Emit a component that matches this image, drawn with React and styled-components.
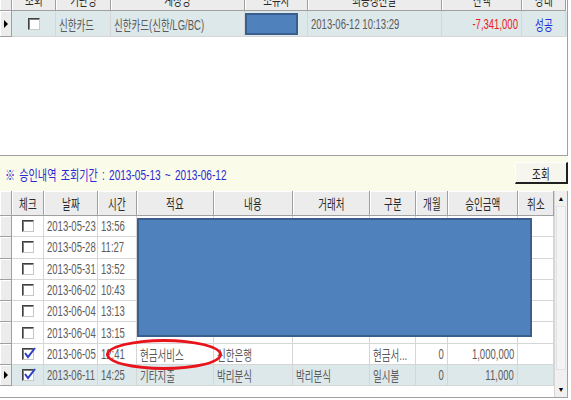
import React from 'react';
import styled, { createGlobalStyle } from 'styled-components';

const Global = createGlobalStyle`
  html, body {
    margin: 0;
    padding: 0;
    background: #ffffff;
  }
  body {
    width: 571px;
    height: 400px;
    overflow: hidden;
    font-family: "Liberation Sans", "Noto Sans CJK KR", sans-serif;
    font-size: 14px;
  }
`;

const Page = styled.div`
  display: flex;
  flex-direction: column;
  width: 568px;
  height: 400px;
`;

const TopGrid = styled.div`
  margin-top: -12px;
  height: 168px;
  border-right: 1px solid #a0a0a0;
  border-bottom: 1px solid #a0a0a0;
  box-sizing: border-box;
`;

const Row = styled.div`
  display: grid;
  grid-template-columns: ${p => p.$cols};
  height: ${p => p.$h}px;
  background: ${p => (p.$sel ? '#dde8ea' : '#ffffff')};
`;

// the screenshot's font is narrow, so every label is squeezed sideways
const Txt = styled.span`
  display: inline-block;
  white-space: nowrap;
  transform: scaleX(0.68);
  transform-origin: ${p => (p.$align === 'right' ? 'right' : p.$align === 'left' ? 'left' : 'center')} center;
`;

const HeadCell = styled.div`
  display: flex;
  align-items: center;
  justify-content: center;
  background: #ececec;
  border-right: 1px solid #a0a0a0;
  border-bottom: 1px solid #a0a0a0;
  box-shadow: inset 1px 1px 0 #ffffff;
  color: #2a2a2a;
  white-space: nowrap;
  overflow: hidden;
`;

const Cell = styled.div`
  position: relative;
  display: flex;
  align-items: center;
  justify-content: ${p => (p.$align === 'right' ? 'flex-end' : p.$align === 'center' ? 'center' : 'flex-start')};
  padding: 0 3px;
  border-right: 1px solid #d6d6d6;
  border-bottom: 1px solid #d6d6d6;
  color: ${p => p.$color || '#5c5c5c'};
  white-space: nowrap;
  overflow: hidden;
  box-sizing: border-box;
`;

const IndCell = styled(HeadCell)`
  justify-content: flex-start;
  padding-left: 4px;
  box-sizing: border-box;
`;

const Arrow = styled.span`
  width: 0;
  height: 0;
  border-top: 4px solid transparent;
  border-bottom: 4px solid transparent;
  border-left: 4px solid #000;
`;

const Box = styled.span`
  position: relative;
  width: 10px;
  height: 10px;
  background: #fff;
  border-top: 1px solid #404040;
  border-left: 1px solid #404040;
  border-right: 1px solid #c8c8c8;
  border-bottom: 1px solid #c8c8c8;
  box-shadow: inset 1px 1px 0 #808080;

  svg {
    position: absolute;
    left: 0;
    top: -2px;
  }
`;

const Redact = styled.div`
  width: 49px;
  height: 18px;
  margin-left: -3px;
  background: #4f81bd;
  border: 2px solid #3a5f8c;
`;

const FilterBar = styled.div`
  display: flex;
  align-items: center;
  justify-content: space-between;
  height: 35px;
  padding: 0 0 0 5px;
  background: #fbfbea;
  box-sizing: border-box;
`;

const FilterText = styled(Txt)`
  color: #2a2ad4;
  word-spacing: 2px;
  transform: scaleX(0.72);
`;

const SearchButton = styled.button`
  width: 53px;
  height: 22px;
  margin-top: -2px;
  font: inherit;
  color: #222;
  background: #f6f6ee;
  border-top: 1px solid #ffffff;
  border-left: 1px solid #ffffff;
  border-right: 2px solid #202020;
  border-bottom: 2px solid #202020;
  padding: 0;
`;

const BottomGrid = styled.div`
  position: relative;
  display: flex;
  height: 207px;
  border-right: 1px solid #a0a0a0;
  border-bottom: 1px solid #a0a0a0;
  box-sizing: border-box;
`;

const GridBody = styled.div`
  flex: 1;
  display: flex;
  flex-direction: column;
`;

const Scrollbar = styled.div`
  width: 14px;
  display: flex;
  flex-direction: column;
  background: #f0f0f0;
  border-left: 1px solid #d6d6d6;
`;

const ScrollBtn = styled.div`
  height: 15px;
  display: flex;
  align-items: center;
  justify-content: center;
  background: #f0f0f0;
  font-size: 7px;
  color: #000;
`;

const Thumb = styled.div`
  flex: 1;
  margin: 0 1px 6px;
  background: #f4f4f4;
  border: 1px solid #e2e2e2;
`;

const Track = styled.div`
  height: 6px;
`;

const Cover = styled.div`
  position: absolute;
  left: 137px;
  top: 27px;
  width: 395px;
  height: 119px;
  box-sizing: border-box;
  background: #4f81bd;
  border: 2px solid #3a5f8c;
`;

const Ring = styled.div`
  position: absolute;
  left: 106px;
  top: 148px;
  width: 116px;
  height: 31px;
  box-sizing: border-box;
  border: 3px solid #e8141c;
  border-radius: 50%;
`;

const topCols = '12px 44px 55px 134px 63px 134px 80px 44px';
const botCols = '12px 32px 54px 39px 77px 79px 77px 46px 32px 70px 36px';

const Check = ({ on }) => (
  <Box>
    {on && (
      <svg width="13" height="13" viewBox="0 0 13 13">
        <path d="M2 6 L5 10 L12 1" fill="none" stroke="#2a3fc8" strokeWidth="2" />
      </svg>
    )}
  </Box>
);

const C = ({ align = 'left', color, children }) => (
  <Cell $align={align} $color={color}>
    {children ? <Txt $align={align}>{children}</Txt> : null}
  </Cell>
);

const H = ({ children }) => (
  <HeadCell>{children ? <Txt>{children}</Txt> : null}</HeadCell>
);

const rows = [
  { d: '2013-05-23', t: '13:56' },
  { d: '2013-05-28', t: '11:27' },
  { d: '2013-05-31', t: '13:52' },
  { d: '2013-06-02', t: '10:43' },
  { d: '2013-06-04', t: '13:13' },
  { d: '2013-06-04', t: '13:15' },
  { d: '2013-06-05', t: '12:41', on: true, a: '현금서비스', b: '신한은행', c: '', k: '현금서...', m: '0', amt: '1,000,000' },
  { d: '2013-06-11', t: '14:25', on: true, sel: true, a: '기타지출', b: '박리분식', c: '박리분식', k: '일시불', m: '0', amt: '11,000' },
];

const heads = ['', '체크', '날짜', '시간', '적요', '내용', '거래처', '구분', '개월', '승인금액', '취소'];

export default function App() {
  return (
    <Page>
      <Global />
      <TopGrid>
        <Row $cols={topCols} $h={23}>
          {['', '조회', '기관명', '계정명', '소유자', '최종갱신일', '잔액', '상태'].map((h, i) => (
            <H key={i}>{h}</H>
          ))}
        </Row>
        <Row $cols={topCols} $h={26} $sel>
          <IndCell><Arrow /></IndCell>
          <Cell $align="center"><Check /></Cell>
          <C>신한카드</C>
          <C>신한카드(신한/LG/BC)</C>
          <Cell><Redact /></Cell>
          <C>2013-06-12 10:13:29</C>
          <C align="right" color="#f02020">-7,341,000</C>
          <C align="center" color="#2030d8">성공</C>
        </Row>
      </TopGrid>

      <FilterBar>
        <FilterText $align="left">※ 승인내역 조회기간 : 2013-05-13 ~ 2013-06-12</FilterText>
        <SearchButton><Txt>조회</Txt></SearchButton>
      </FilterBar>

      <BottomGrid>
        <GridBody>
          <Row $cols={botCols} $h={25}>
            {heads.map((h, i) => (
              <H key={i}>{h}</H>
            ))}
          </Row>
          {rows.map((r, i) => (
            <Row key={i} $cols={botCols} $h={21.3} $sel={r.sel}>
              <IndCell>{r.sel && <Arrow />}</IndCell>
              <Cell $align="center"><Check on={r.on} /></Cell>
              <C>{r.d}</C>
              <C>{r.t}</C>
              <C>{r.a}</C>
              <C>{r.b}</C>
              <C>{r.c}</C>
              <C>{r.k}</C>
              <C align="right">{r.m}</C>
              <C align="right">{r.amt}</C>
              <C />
            </Row>
          ))}
        </GridBody>
        <Scrollbar>
          <ScrollBtn>▲</ScrollBtn>
          <Thumb />
          <Track />
          <ScrollBtn>▼</ScrollBtn>
        </Scrollbar>
        <Cover />
        <Ring />
      </BottomGrid>
    </Page>
  );
}
